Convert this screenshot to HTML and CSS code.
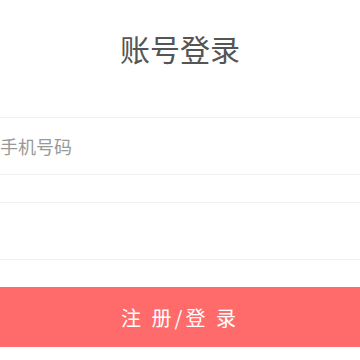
FILE: index.html
```
<!DOCTYPE html>
<html lang="zh">

<head>
    <meta charset="UTF-8">
    <meta name="viewport" content="width=device-width, initial-scale=1.0">
    <title>账号登录</title>
    <link rel="stylesheet" href="styles.css">
</head>

<body>
    <div class="title">账号登录</div>
    <div class="form">
        <div class="field">
            <input type="tel" id="phone" placeholder="手机号码">
        </div>
        <div class="field">
            <input type="password" id="code">
        </div>
        <button class="btn" id="login">注 册/登 录</button>
    </div>
</body>

</html>
```

FILE: styles.css
```
* {
    margin: 0px;
    padding: 0px;
    box-sizing: border-box;
}

body {
    background-color: #fff;
    font-family: "Noto Sans CJK SC", "Noto Sans", sans-serif;
}

.title {
    text-align: center;
    font-size: 30px;
    line-height: 40px;
    color: #555;
    padding-top: 28px;
    height: 117px;
}

.form {
    display: flex;
    flex-direction: column;
    gap: 27px;
}

.field {
    height: 58px;
    border-top: 1px solid #f2f2f2;
    border-bottom: 1px solid #f2f2f2;
    display: flex;
    align-items: center;
}

.field input {
    width: 100%;
    height: 100%;
    border: none;
    outline: none;
    font-size: 18px;
    font-family: "Noto Sans CJK SC", sans-serif;
    color: #333;
    background: transparent;
}

.field input::placeholder {
    color: #999;
}

.btn {
    height: 60px;
    width: 100%;
    border: none;
    background-color: #ff6b6b;
    color: #fff;
    font-size: 20px;
    font-family: "Noto Sans CJK SC", sans-serif;
    letter-spacing: 3px;
}
```
